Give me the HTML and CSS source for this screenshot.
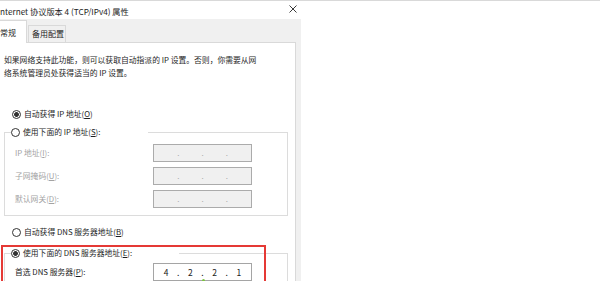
FILE: index.html
```html
<!DOCTYPE html>
<html lang="zh-CN">
<head>
<meta charset="utf-8">
<title>Internet 协议版本 4 (TCP/IPv4) 属性</title>
<link rel="stylesheet" href="styles.css">
</head>
<body>
<div class="page">
  <div class="window">
    <div class="titlebar">
      <span class="title">nternet 协议版本 4 (TCP/IPv4) 属性</span>
      <span class="close"><svg width="8" height="8" viewBox="0 0 8 8"><path d="M0.5 0.5L7.5 7.5M7.5 0.5L0.5 7.5" stroke="#3a3a3a" stroke-width="1" fill="none"/></svg></span>
    </div>
    <div class="dlg">
      <div class="tabs">
        <div class="tab active">常规</div>
        <div class="tab inactive">备用配置</div>
      </div>
      <div class="panel">
        <p class="desc">如果网络支持此功能，则可以获取自动指派的 IP 设置。否则，你需要从网<br>络系统管理员处获得适当的 IP 设置。</p>
        <div class="radio r1"><span class="dot on"></span><span>自动获得 IP 地址(<u>O</u>)</span></div>
        <fieldset class="group g1">
          <legend class="radio lg1"><span class="dot"></span><span>使用下面的 IP 地址(<u>S</u>):</span></legend>
          <div class="rows">
            <div class="row disabled"><span class="lbl">IP 地址(<u>I</u>):</span><span class="ipbox"><span class="seg"></span><span class="sep">.</span><span class="seg"></span><span class="sep">.</span><span class="seg"></span><span class="sep">.</span><span class="seg"></span></span></div>
            <div class="row disabled"><span class="lbl">子网掩码(<u>U</u>):</span><span class="ipbox"><span class="seg"></span><span class="sep">.</span><span class="seg"></span><span class="sep">.</span><span class="seg"></span><span class="sep">.</span><span class="seg"></span></span></div>
            <div class="row disabled"><span class="lbl">默认网关(<u>D</u>):</span><span class="ipbox"><span class="seg"></span><span class="sep">.</span><span class="seg"></span><span class="sep">.</span><span class="seg"></span><span class="sep">.</span><span class="seg"></span></span></div>
          </div>
        </fieldset>
        <div class="radio r3"><span class="dot"></span><span>自动获得 DNS 服务器地址(<u>B</u>)</span></div>
        <fieldset class="group g2">
          <legend class="radio lg2"><span class="dot on"></span><span>使用下面的 DNS 服务器地址(<u>E</u>):</span></legend>
          <div class="rows rows2">
            <div class="row"><span class="lbl">首选 DNS 服务器(<u>P</u>):</span><span class="ipbox active-box"><span class="seg">4</span><span class="sep">.</span><span class="seg">2</span><span class="sep">.</span><span class="seg">2</span><span class="sep">.</span><span class="seg">1</span><span class="cursor-dot"></span></span></div>
          </div>
        </fieldset>
        <div class="highlight"></div>
      </div>
    </div>
  </div>
</div>
</body>
</html>
```
FILE: styles.css
```css
html, body {
  margin: 0;
  padding: 0;
  background: #ffffff;
}
body {
  font-family: "Noto Sans CJK SC", "Noto Sans", sans-serif;
  font-size: 7.8px;
  color: #1e1e1e;
  overflow: hidden;
  width: 600px;
  height: 281px;
}
.page {
  border-top: 1px solid #d9d9d9;
  height: 280px;
}
.window {
  width: 301px;
}
.titlebar {
  height: 18px;
  display: flex;
  justify-content: space-between;
  align-items: center;
  background: #ffffff;
}
.title {
  font-size: 8.2px;
  line-height: 12px;
  margin-top: 1px;
  white-space: nowrap;
}
.close {
  align-self: flex-start;
  margin-top: 4px;
  margin-right: 4px;
  width: 8px;
  height: 8px;
  display: block;
}
.close svg {
  display: block;
}
.dlg {
  background: #f0f0f0;
  height: 262px;
  padding-top: 1px;
  box-sizing: border-box;
}
.tabs {
  display: flex;
  align-items: flex-end;
  height: 22px;
}
.tab {
  box-sizing: border-box;
  line-height: 12px;
  white-space: nowrap;
  font-size: 8px;
}
.tab.active {
  position: relative;
  z-index: 1;
  width: 27px;
  height: 23px;
  margin-bottom: -1px;
  background: #ffffff;
  border-top: 1px solid #d9d9d9;
  border-right: 1px solid #d9d9d9;
  padding-top: 6px;
}
.tab.inactive {
  width: 38px;
  height: 17px;
  margin-left: 1px;
  border: 1px solid #d9d9d9;
  border-bottom: none;
  padding: 2px 0 0 3px;
  background: #f0f0f0;
}
.panel {
  position: relative;
  width: 296px;
  height: 239px;
  box-sizing: border-box;
  background: #ffffff;
  border-top: 1px solid #d9d9d9;
  border-right: 1px solid #d9d9d9;
  overflow: hidden;
}
.desc {
  margin: 10px 0 0 4px;
  line-height: 13px;
  white-space: nowrap;
}
.radio {
  display: flex;
  align-items: center;
  gap: 3px;
  height: 12px;
  line-height: 12px;
  white-space: nowrap;
}
.dot {
  width: 9px;
  height: 9px;
  box-sizing: border-box;
  border: 1px solid #333333;
  border-radius: 50%;
  flex: none;
  background: #ffffff;
}
.dot.on {
  background: radial-gradient(circle, #333333 0 2.1px, #ffffff 2.6px);
}
.r1 {
  margin: 29px 0 0 12px;
}
.r3 {
  margin: 10px 0 0 12px;
}
.group {
  margin: 6px 0 0 4px;
  padding: 0 0 7px 6px;
  width: 284px;
  box-sizing: border-box;
  min-width: 0;
  border: 1px solid #dcdcdc;
}
.g2 {
  margin-top: 9px;
}
.group legend {
  padding: 0;
  margin: 0;
  background: #ffffff;
}
.lg1 {
  width: 137px;
}
.lg2 {
  width: 168px;
}
.rows {
  display: flex;
  flex-direction: column;
  gap: 5px;
  margin-top: 6px;
  padding-left: 4px;
}
.rows2 {
  margin-top: 4px;
}
.row {
  display: flex;
  align-items: center;
  height: 18px;
  white-space: nowrap;
}
.lbl {
  width: 138px;
  line-height: 12px;
}
.row.disabled .lbl {
  color: #a3a3a3;
}
.ipbox {
  position: relative;
  width: 99px;
  height: 18px;
  box-sizing: border-box;
  border: 1px solid #ababab;
  background: #f0f0f0;
  display: flex;
  align-items: center;
  color: #a8a8a8;
}
.active-box {
  background: #ffffff;
  border-color: #a5a5a5;
  color: #222222;
  font-size: 8.5px;
}
.seg {
  flex: 1;
  text-align: center;
  line-height: 12px;
}
.sep {
  width: 0;
  display: flex;
  justify-content: center;
  line-height: 12px;
}
.cursor-dot {
  position: absolute;
  left: 48px;
  top: 15px;
  width: 3px;
  height: 3px;
  border-radius: 50%;
  background: #7cc242;
}
.highlight {
  position: absolute;
  top: 202px;
  left: 1px;
  width: 265px;
  height: 60px;
  box-sizing: border-box;
  border: 2px solid #e53935;
}
```
